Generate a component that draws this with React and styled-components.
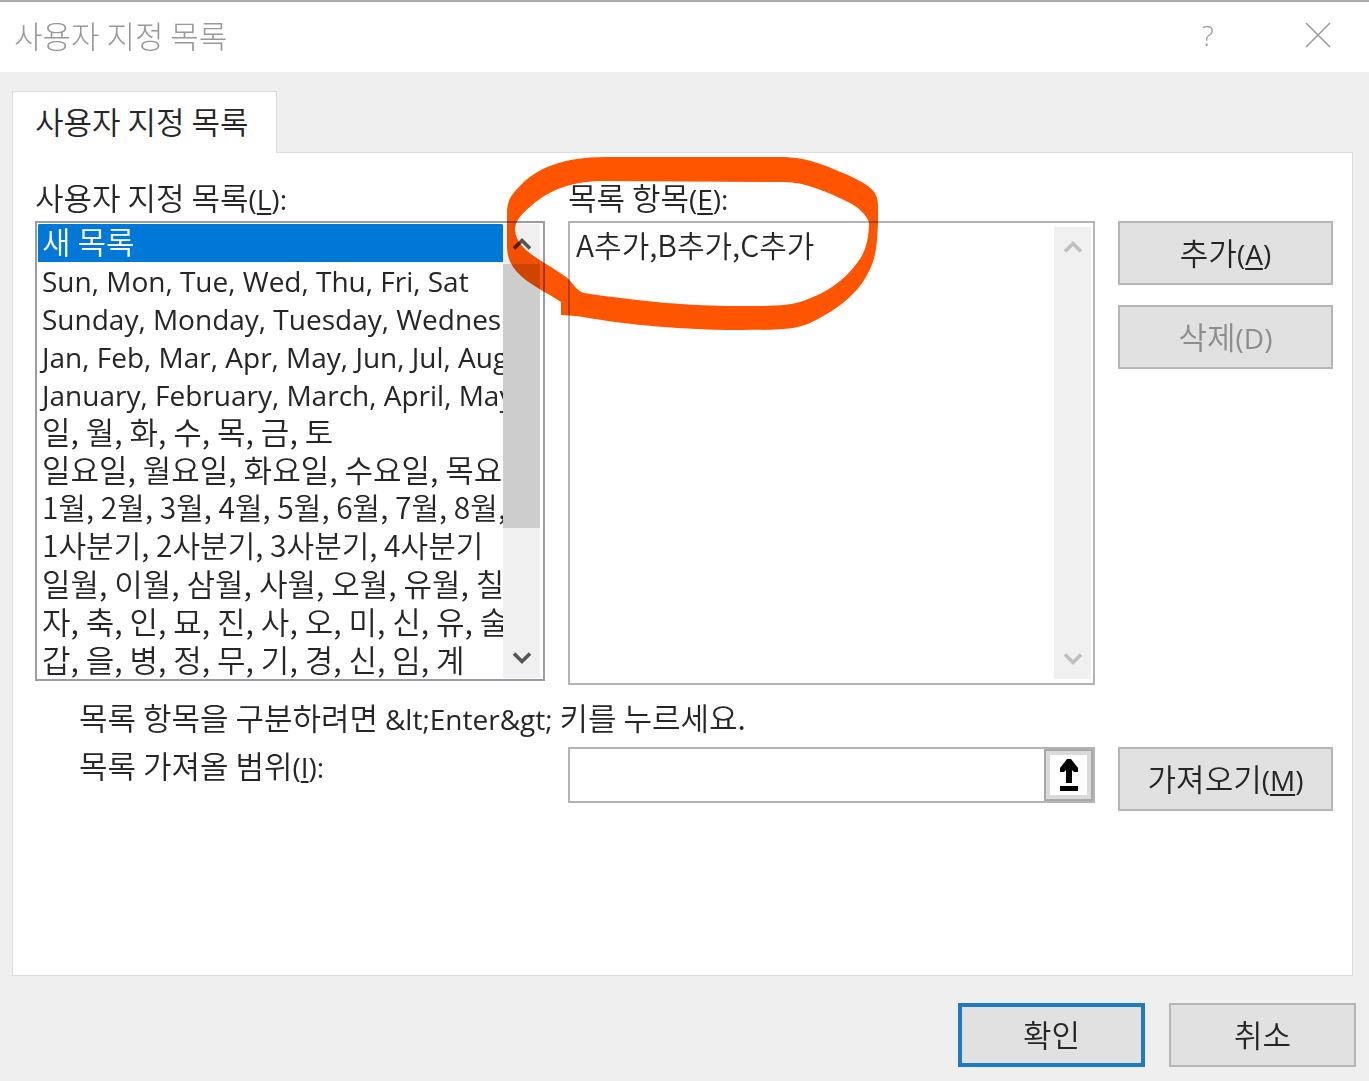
import { useState } from "react";
import styled, { createGlobalStyle, css } from "styled-components";

const GlobalStyle = createGlobalStyle`
  *,
  *::before,
  *::after {
    box-sizing: border-box;
  }

  body {
    margin: 0;
    background-color: #efefef;
    color: #262626;
    font-family: "Noto Sans CJK KR", "Open Sans", sans-serif;
    font-size: 31px;
    font-weight: 350;
    line-height: 40px;
  }

  button,
  input,
  select,
  textarea {
    margin: 0;
    color: inherit;
    font: inherit;
    outline: none;
  }
`;

const Dialog = styled.main`
  display: flex;
  flex-direction: column;
  min-height: 100vh;
`;

const TitleBar = styled.header`
  display: flex;
  align-items: center;
  justify-content: space-between;
  height: 72px;
  padding: 0 26px 4px 14px;
  border-top: 2px solid #ababab;
  background-color: #ffffff;
  color: #999999;

  h1 {
    margin: 0;
    font-size: 31px;
    font-weight: 300;
  }
`;

const WindowButtons = styled.div`
  display: flex;
  gap: 60px;
`;

const WindowButton = styled.button`
  display: flex;
  align-items: center;
  justify-content: center;
  width: 50px;
  height: 40px;
  padding: 0;
  border: none;
  background: none;
  font-family: "Open Sans", sans-serif;
  font-size: 28px;
`;

const Body = styled.div`
  display: flex;
  flex: 1;
  flex-direction: column;
  padding: 19px 16px 0 12px;
`;

const Tabs = styled.div`
  display: flex;
`;

const Tab = styled.button`
  height: 62px;
  margin-bottom: -1px;
  padding: 0 28px 4px 22px;
  border: 1px solid #dcdcdc;
  border-bottom: none;
  background-color: #ffffff;
  z-index: 1;
`;

const Panel = styled.section`
  flex: 1;
  padding: 28px 19px 24px 22px;
  border: 1px solid #dcdcdc;
  background-color: #ffffff;
`;

const columns = css`
  display: grid;
  grid-template-columns: 510fr 527fr 215px;
  column-gap: 23px;
  align-items: start;
`;

const Lists = styled.div`
  ${columns}
`;

const ImportRow = styled.div`
  ${columns}
`;

const Field = styled.div`
  position: relative;
  display: flex;
  flex-direction: column;
  min-width: 0;
`;

const Label = styled.label`
  height: 40px;
  line-height: 32px;
  white-space: nowrap;
`;

const ImportLabel = styled(Label)`
  padding-left: 44px;
  line-height: 36px;
`;

const Latin = styled.span`
  font-family: "Open Sans", sans-serif;
  font-size: 28px;
  font-weight: 400;
  line-height: 1;

  u {
    text-decoration-thickness: 2px;
    text-underline-offset: 3px;
  }
`;

const Frame = styled.div`
  display: flex;
  padding: ${(props) => (props.$inset ? "4px 2px" : "1px 3px 1px 1px")};
  border: 2px solid ${(props) => (props.$inset ? "#b4b4b4" : "#9a9ea4")};
  background-color: #ffffff;
`;

const ListBox = styled.select`
  flex: 1;
  min-width: 0;
  height: 454px;
  padding: 0;
  border: none;
  background-color: #ffffff;
  overflow: hidden;
  scrollbar-width: none;

  option:checked {
    background: #0078d7 linear-gradient(#0078d7, #0078d7);
    color: #ffffff;
  }
`;

const optionFonts = {
  hangul: css`
    padding: 0 0 6px 4px;
    font-size: 31px;
    font-weight: 350;
  `,
  digits: css`
    padding: 0 0 6px 4px;
    font-size: 30px;
    font-weight: 350;
  `,
  latin: css`
    padding: 0 0 0 4px;
    font-family: "Open Sans", sans-serif;
    font-size: 28px;
    font-weight: 400;
  `,
};

const Option = styled.option`
  display: flex;
  align-items: center;
  height: 38px;
  min-height: 38px;
  overflow: hidden;

  ${ListBox} & {
    ${(props) => optionFonts[props.$kind]}
  }
`;

const ItemsBox = styled.textarea`
  flex: 1;
  min-width: 0;
  height: 452px;
  padding: 0 4px;
  border: none;
  background: none;
  font-size: 30px;
  line-height: 34px;
  resize: none;
  overflow: hidden;
`;

const Scrollbar = styled.div`
  display: flex;
  flex-direction: column;
  width: 37px;
  background-color: #f0f0f0;
  color: ${(props) => (props.$disabled ? "#bfbfbf" : "#555555")};
`;

const ScrollButton = styled.button`
  display: flex;
  align-items: center;
  justify-content: center;
  height: 40px;
  padding: 0;
  border: none;
  background: none;
`;

const Track = styled.div`
  flex: 1;
`;

const Thumb = styled.div`
  height: 264px;
  background-color: #cdcdcd;
`;

const Actions = styled.div`
  display: flex;
  flex-direction: column;
  gap: 20px;
  padding-top: 40px;
`;

const Button = styled.button`
  height: 64px;
  padding: 0 0 2px;
  border: 2px solid #b6b6b6;
  background-color: #e1e1e1;

  &:disabled {
    color: #8c8c8c;
  }

  ${(props) =>
    props.$primary &&
    css`
      border: 4px solid #1f7ac4;
    `}
`;

const Hint = styled.p`
  height: 62px;
  margin: 0;
  padding: 12px 0 0 44px;
`;

const RangeField = styled.div`
  display: flex;
  height: 56px;
  border: 2px solid #b4b4b4;
`;

const RangeInput = styled.input`
  flex: 1;
  min-width: 0;
  padding: 0 6px;
  border: none;
`;

const PickButton = styled.button`
  display: flex;
  width: 49px;
  padding: 0;
  border: 6px solid #dadada;
  outline: 2px solid #a9a9a9;
  outline-offset: -2px;
  background-color: #ffffff;
  align-items: center;
  justify-content: center;
`;

const Footer = styled.footer`
  display: grid;
  grid-template-columns: 187px 187px;
  justify-content: end;
  gap: 24px;
  padding: 27px 13px 14px;
`;

const Ring = styled.svg`
  position: absolute;
  top: -31px;
  left: -68px;
  width: 390px;
  height: 190px;
  mix-blend-mode: multiply;
  pointer-events: none;
`;

const lists = [
  { kind: "hangul", text: "새 목록" },
  { kind: "latin", text: "Sun, Mon, Tue, Wed, Thu, Fri, Sat" },
  { kind: "latin", text: "Sunday, Monday, Tuesday, Wednesday, Thursday" },
  { kind: "latin", text: "Jan, Feb, Mar, Apr, May, Jun, Jul, Aug, Sep, Oct" },
  { kind: "latin", text: "January, February, March, April, May, June, July" },
  { kind: "hangul", text: "일, 월, 화, 수, 목, 금, 토" },
  { kind: "hangul", text: "일요일, 월요일, 화요일, 수요일, 목요일" },
  { kind: "digits", text: "1월, 2월, 3월, 4월, 5월, 6월, 7월, 8월, 9월" },
  { kind: "digits", text: "1사분기, 2사분기, 3사분기, 4사분기" },
  { kind: "hangul", text: "일월, 이월, 삼월, 사월, 오월, 유월, 칠월" },
  { kind: "hangul", text: "자, 축, 인, 묘, 진, 사, 오, 미, 신, 유, 술, 해" },
  { kind: "hangul", text: "갑, 을, 병, 정, 무, 기, 경, 신, 임, 계" },
];

const Chevron = ({ down }) => (
  <svg width="20" height="14" viewBox="0 0 20 14" aria-hidden="true">
    <path
      d={down ? "M2 2.5 L10 10.5 L18 2.5" : "M2 11.5 L10 3.5 L18 11.5"}
      fill="none"
      stroke="currentColor"
      strokeWidth="3.6"
    />
  </svg>
);

const ScrollBar = ({ disabled }) => (
  <Scrollbar $disabled={disabled}>
    <ScrollButton type="button" aria-label="위로" disabled={disabled}>
      <Chevron />
    </ScrollButton>
    <Track>{!disabled && <Thumb />}</Track>
    <ScrollButton type="button" aria-label="아래로" disabled={disabled}>
      <Chevron down />
    </ScrollButton>
  </Scrollbar>
);

// Access key shown in brackets after a caption
const AccessKey = ({ letter, colon, plain }) => (
  <Latin>
    ({plain ? letter : <u>{letter}</u>}){colon && ":"}
  </Latin>
);

const App = () => {
  const [selected, setSelected] = useState("새 목록");
  const [items, setItems] = useState("A추가,B추가,C추가");
  const [range, setRange] = useState("");

  return (
    <Dialog>
      <GlobalStyle />

      <TitleBar>
        <h1>사용자 지정 목록</h1>
        <WindowButtons>
          <WindowButton type="button">?</WindowButton>
          <WindowButton type="button" aria-label="닫기">
            <svg width="26" height="26" viewBox="0 0 26 26" aria-hidden="true">
              <path d="M1 1 L25 25 M25 1 L1 25" stroke="#999999" strokeWidth="1.5" />
            </svg>
          </WindowButton>
        </WindowButtons>
      </TitleBar>

      <Body>
        <Tabs role="tablist">
          <Tab type="button" role="tab" aria-selected="true">
            사용자 지정 목록
          </Tab>
        </Tabs>

        <Panel>
          <Lists>
            <Field>
              <Label htmlFor="lists">
                사용자 지정 목록
                <AccessKey letter="L" colon />
              </Label>
              <Frame>
                <ListBox
                  id="lists"
                  size={12}
                  value={selected}
                  onChange={(e) => setSelected(e.target.value)}
                >
                  {lists.map((list) => (
                    <Option key={list.text} value={list.text} $kind={list.kind}>
                      {list.text}
                    </Option>
                  ))}
                </ListBox>
                <ScrollBar />
              </Frame>
            </Field>

            <Field>
              <Label htmlFor="items">
                목록 항목
                <AccessKey letter="E" colon />
              </Label>
              <Frame $inset>
                <ItemsBox
                  id="items"
                  spellCheck={false}
                  value={items}
                  onChange={(e) => setItems(e.target.value)}
                />
                <ScrollBar disabled />
              </Frame>
              <Ring viewBox="500 150 390 190" aria-hidden="true">
                <path
                  fill="#ff5500"
                  fillRule="evenodd"
                  d="M561 315 L561 302 C548 293 529 285 517 272 C509 263 507 255 507 245 L507 210 C508 199 512 194 519 187 C535 169 562 157 605 157 L783 157 C812 158 828 167 848 175 C866 184 878 189 878 205 L878 223 C877 241 877 256 869 271 C859 293 838 309 814 321 C797 330 780 330 737 330 C685 330 628 325 583 317 C575 316 569 315 561 315 Z
                  M584 293 C575 290 573 282 566 277 C552 267 538 260 527 251 C519 243 515 238 515 228 C516 219 524 212 532 205 C550 190 570 182 600 181 L783 182 C807 182 829 193 848 202 C860 208 866 215 869 222 C869 238 866 252 857 263 C844 281 826 293 803 301 C789 306 775 306 737 306 C690 306 645 302 584 293 Z"
                />
              </Ring>
            </Field>

            <Actions>
              <Button type="button">
                추가
                <AccessKey letter="A" />
              </Button>
              <Button type="button" disabled>
                삭제
                <AccessKey letter="D" plain />
              </Button>
            </Actions>
          </Lists>

          <Hint>
            목록 항목을 구분하려면 <Latin>{"&lt;Enter&gt;"}</Latin> 키를 누르세요.
          </Hint>

          <ImportRow>
            <ImportLabel htmlFor="range">
              목록 가져올 범위
              <AccessKey letter="I" colon />
            </ImportLabel>
            <RangeField>
              <RangeInput
                id="range"
                type="text"
                value={range}
                onChange={(e) => setRange(e.target.value)}
              />
              <PickButton type="button" aria-label="범위 선택">
                <svg width="20" height="34" viewBox="0 0 20 34" aria-hidden="true">
                  <path d="M8 1 H12 L19 10 V14 H15 L13 12 V25 H7 V12 L5 14 H1 V10 Z M1 28 H19 V33 H1 Z" />
                </svg>
              </PickButton>
            </RangeField>
            <Button type="button">
              가져오기
              <AccessKey letter="M" />
            </Button>
          </ImportRow>
        </Panel>
      </Body>

      <Footer>
        <Button type="button" $primary>
          확인
        </Button>
        <Button type="button">취소</Button>
      </Footer>
    </Dialog>
  );
};

export default App;
